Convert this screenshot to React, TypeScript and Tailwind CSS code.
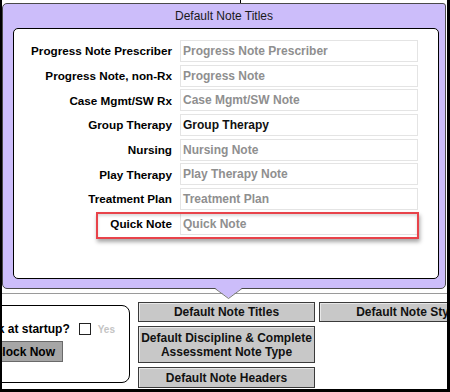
import React from "react";

const ROWS = [
	{ label: "Progress Note Prescriber", value: "Progress Note Prescriber", set: false },
	{ label: "Progress Note, non-Rx", value: "Progress Note", set: false },
	{ label: "Case Mgmt/SW Rx", value: "Case Mgmt/SW Note", set: false },
	{ label: "Group Therapy", value: "Group Therapy", set: true },
	{ label: "Nursing", value: "Nursing Note", set: false },
	{ label: "Play Therapy", value: "Play Therapy Note", set: false },
	{ label: "Treatment Plan", value: "Treatment Plan", set: false },
	{ label: "Quick Note", value: "Quick Note", set: false, marked: true },
];

const GrayButton = ({ children, className = "" }: { children: React.ReactNode; className?: string }) => (
	<div
		className={
			"shrink-0 flex items-center justify-center text-center text-[12px] font-bold leading-[14px] text-[#111] bg-[#c8c8c8] border border-[#3a3a3a] shadow-[inset_1px_1px_0_#e8e8e8] whitespace-nowrap " +
			className
		}
	>
		{children}
	</div>
);

export default function App() {
	return (
		<div
			className="relative w-[450px] h-[392px] overflow-hidden bg-white border-l-2 border-r-[3px] border-b-[3px] border-black"
			style={{ fontFamily: '"Liberation Sans", Arial, sans-serif' }}
		>
			{/* page behind the popup, mostly hidden */}
			<div className="h-[3px] relative">
				<span className="absolute left-[238px] top-0 w-px h-[3px] bg-black" />
			</div>

			{/* popup */}
			<div className="w-[444px] h-[286px] bg-[#ccbdfa] border border-[#4a4a4a] rounded-[5px] rounded-tr-[3px] flex flex-col">
				<div className="h-[24px] flex items-center justify-center text-[12px] text-[#1a1a1a]">
					Default Note Titles
				</div>
				<div className="ml-[10px] w-[426px] h-[251px] bg-white border border-black rounded-[5px] pt-[11px] flex flex-col gap-[2.7px]">
					{ROWS.map((row) => (
						<div key={row.label} className="relative flex items-center h-[22px]">
							<div className="w-[158px] text-right text-[11.7px] font-bold text-black whitespace-nowrap">
								{row.label}
							</div>
							<div
								className={
									"ml-[8px] w-[238px] h-[22px] flex items-center pl-[2px] border border-[#e4e4e4] text-[12px] font-bold whitespace-nowrap " +
									(row.set ? "text-[#111]" : "text-[#8f8f8f]")
								}
							>
								{row.value}
							</div>
							{row.marked && (
								<span className="absolute left-[82px] top-[-1px] w-[323px] h-[27px] border-2 border-[#e8434a] shadow-[1px_3px_4px_rgba(0,0,0,0.35),inset_0_2px_3px_rgba(0,0,0,0.15)]" />
							)}
						</div>
					))}
				</div>
			</div>

			{/* popup pointer */}
			<svg className="absolute left-[213px] top-[288px]" width="27" height="12" viewBox="0 0 27 12">
				<polygon points="0,0 13.5,10 27,0" fill="#ccbdfa" />
				<polyline points="0,0.5 13.5,10.5 27,0.5" fill="none" stroke="#777" strokeWidth="1" />
			</svg>

			{/* page behind */}
			<div className="h-[4px]" />
			<div className="h-px bg-[#9a9a9a]" />
			<div className="h-[8px]" />

			<div className="flex items-start">
				<div className="shrink-0 ml-[-171px] mt-[3px] w-[299px] h-[78px] border border-black rounded-[8px] flex flex-col pt-[17px]">
					<div className="self-end mr-[14px] flex items-center h-[12px]">
						<span className="text-[12px] font-bold text-black whitespace-nowrap">Check clock at startup?</span>
						<span className="ml-[9px] w-[12px] h-[12px] border border-[#222] bg-white" />
						<span className="ml-[7px] text-[10px] font-bold text-[#c4c4c4]">Yes</span>
					</div>
					<div className="self-end mr-[66px] mt-[6px] h-[21px] px-[7px] flex items-center bg-[#a6a6a6] border border-[#6a6a6a] text-[12px] font-bold text-black whitespace-nowrap">
						Set Clock Now
					</div>
				</div>

				<div className="shrink-0 ml-[8px] w-[177px] flex flex-col gap-[4px]">
					<GrayButton className="h-[20px]">Default Note Titles</GrayButton>
					<GrayButton className="h-[37px]">
						Default Discipline &amp; Complete
						<br />
						Assessment Note Type
					</GrayButton>
					<GrayButton className="h-[21px]">Default Note Headers</GrayButton>
				</div>

				<GrayButton className="ml-[4px] w-[177px] h-[20px]">Default Note Style</GrayButton>
			</div>
		</div>
	);
}
